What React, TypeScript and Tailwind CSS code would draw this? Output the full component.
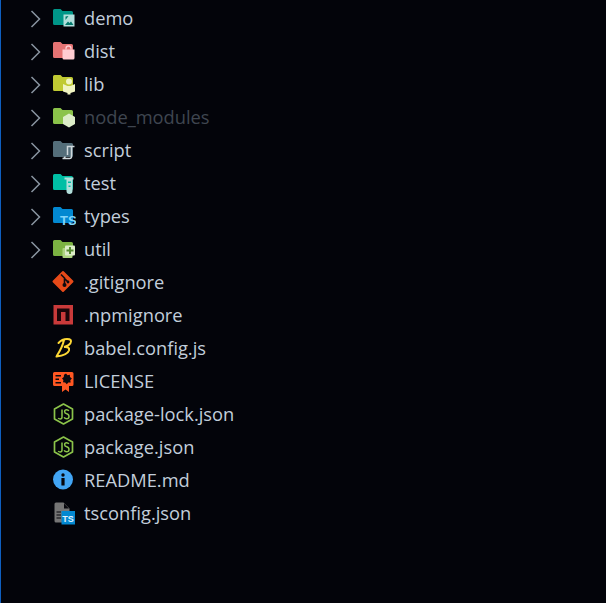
import type { ReactNode } from "react";

function Folder({ color, children }: { color: string; children?: ReactNode }) {
  return (
    <svg width="24" height="24" viewBox="0 0 24 24" aria-hidden="true">
      <path
        d="M2.500 3H8.500L10.500 5H19.500A1.500 1.500 0 0 1 21 6.500V17.500A1.500 1.500 0 0 1 19.500 19H2.500A1.500 1.500 0 0 1 1 17.500V4.500A1.500 1.500 0 0 1 2.500 3Z"
        fill={color}
      />
      {children}
    </svg>
  );
}

function Icon({ children }: { children: ReactNode }) {
  return (
    <svg width="24" height="24" viewBox="0 0 24 24" aria-hidden="true">
      {children}
    </svg>
  );
}

function JsHex() {
  return (
    <Icon>
      <path
        d="M11.500 2L20.500 7V17L11.500 22L2.500 17V7Z"
        fill="none"
        stroke="#8bc34a"
        strokeWidth="1.700"
        strokeLinejoin="round"
      />
      <path
        d="M10 7.500V15Q10 17 8.200 17Q6.800 17 6.300 16"
        fill="none"
        stroke="#8bc34a"
        strokeWidth="1.500"
      />
      <path
        d="M16.800 9Q16.200 7.700 14.600 7.700Q12.600 7.700 12.600 9.600Q12.600 11.300 14.700 11.800Q17 12.400 17 14.400Q17 16.700 14.700 16.700Q12.800 16.700 12.200 15.200"
        fill="none"
        stroke="#8bc34a"
        strokeWidth="1.500"
      />
    </Icon>
  );
}

const rows: { name: string; icon: ReactNode; folder?: boolean; dim?: boolean }[] = [
  {
    name: "demo",
    folder: true,
    icon: (
      <Folder color="#009688">
        <rect x="11.500" y="8.500" width="11" height="12" fill="#b2dfdb" />
        <path d="M13 19L16 15.500L17.500 17L19 15.500L21.500 19Z" fill="#00796b" />
        <path d="M13.500 10.500L16.500 10L13.500 14Z" fill="#00796b" />
      </Folder>
    ),
  },
  {
    name: "dist",
    folder: true,
    icon: (
      <Folder color="#e57373">
        <path d="M10.500 10.500H22.500V19A1.500 1.500 0 0 1 21 20.500H12A1.500 1.500 0 0 1 10.500 19Z" fill="#ffcdd2" />
        <path d="M14 10.500V9.500A2.500 2.500 0 0 1 19 9.500V10.500" fill="none" stroke="#ffcdd2" strokeWidth="1.300" />
      </Folder>
    ),
  },
  {
    name: "lib",
    folder: true,
    icon: (
      <Folder color="#c0ca33">
        <path d="M11 12L15.500 14H18.500L23 12V19.500L18.500 21V22.500H15.500V21L11 19.500Z" fill="#f0f4c3" />
        <circle cx="17" cy="9.500" r="3" fill="#f0f4c3" />
      </Folder>
    ),
  },
  {
    name: "node_modules",
    folder: true,
    dim: true,
    icon: (
      <Folder color="#8bc34a">
        <path d="M17 8.500L23 12V19L17 22.500L11 19V12Z" fill="#dcedc8" />
      </Folder>
    ),
  },
  {
    name: "script",
    folder: true,
    icon: (
      <Folder color="#546e7a">
        <path
          d="M15.500 17V8.500H22.500M19.500 8.500V18.500Q19.500 20.500 17.500 20.500H10.500Q13 20.500 13 18.500"
          fill="none"
          stroke="#cfd8dc"
          strokeWidth="1.500"
        />
      </Folder>
    ),
  },
  {
    name: "test",
    folder: true,
    icon: (
      <Folder color="#00bfa5">
        <path d="M12.500 6.500H21.500V8.500H20.500V20A3 3 0 0 1 14.500 20V8.500H12.500Z" fill="#b2dfdb" />
        <rect x="16" y="10.500" width="3" height="1.500" fill="#00bfa5" />
        <rect x="16.500" y="14.500" width="2" height="1.500" fill="#00bfa5" />
      </Folder>
    ),
  },
  {
    name: "types",
    folder: true,
    icon: (
      <Folder color="#0288d1">
        <text x="8" y="21" fontFamily="'Liberation Sans', sans-serif" fontWeight="700" fontSize="13" fill="#81d4fa">
          TS
        </text>
      </Folder>
    ),
  },
  {
    name: "util",
    folder: true,
    icon: (
      <Folder color="#7cb342">
        <rect x="10.500" y="11" width="10" height="10" rx="1" fill="#aed581" />
        <rect x="13" y="8.500" width="10" height="10" rx="1" fill="#dcedc8" />
        <path d="M18 10V17M14.500 13.500H21.500" stroke="#558b2f" strokeWidth="2" />
      </Folder>
    ),
  },
  {
    name: ".gitignore",
    icon: (
      <Icon>
        <path d="M11 2L20.500 11.500L11 21L1.500 11.500Z" fill="#e64a19" stroke="#e64a19" strokeWidth="2" strokeLinejoin="round" />
        <path d="M9 4.500L12.500 8V15M12.500 8.500L16 12" fill="none" stroke="#0a0a10" strokeWidth="1.600" />
        <circle cx="12.500" cy="15" r="2" fill="#0a0a10" />
        <circle cx="16" cy="12" r="1.400" fill="#0a0a10" />
      </Icon>
    ),
  },
  {
    name: ".npmignore",
    icon: (
      <Icon>
        <rect x="1.500" y="2" width="19.500" height="19.500" fill="#c93a3a" />
        <path d="M5 18V5.500H17.500V18H13.500V9H9V18Z" fill="#1a0508" />
      </Icon>
    ),
  },
  {
    name: "babel.config.js",
    icon: (
      <Icon>
        <path
          d="M6.500 7Q10 3 15 3Q20.500 3 18.500 7Q17 9.800 12 11Q18 10.500 17 14.500Q15.500 19 4.500 20.500M12 4Q10.500 11 5 19.500"
          fill="none"
          stroke="#fdd835"
          strokeWidth="2"
          strokeLinecap="round"
        />
      </Icon>
    ),
  },
  {
    name: "LICENSE",
    icon: (
      <Icon>
        <path
          d="M2.500 3H20A1.500 1.500 0 0 1 21.500 4.500V15.500A1.500 1.500 0 0 1 20 17H17V23L13.500 20.500L10 23V17H2.500A1.500 1.500 0 0 1 1 15.500V4.500A1.500 1.500 0 0 1 2.500 3Z"
          fill="#ff5722"
        />
        <path d="M3.500 6H9V7.500H3.500ZM3.500 9.500H7V11H3.500ZM3.500 13H9V14.500H3.500Z" fill="#0a0a10" />
        <path
          d="M14 4.500L15.500 6.300L17.800 5.800L18 8L19.900 9.500L18.300 11.200L18.700 13.400L16.300 13.600L14.800 15.300L13.200 13.600L11 13.200L11.400 11L10 9.500L11.800 8L12 5.800Z"
          fill="#0a0a10"
        />
      </Icon>
    ),
  },
  { name: "package-lock.json", icon: <JsHex /> },
  { name: "package.json", icon: <JsHex /> },
  {
    name: "README.md",
    icon: (
      <Icon>
        <circle cx="11" cy="11.500" r="10" fill="#42a5f5" />
        <circle cx="11" cy="7" r="1.700" fill="#06060c" />
        <rect x="9.400" y="10" width="3.200" height="7.500" rx="0.500" fill="#06060c" />
      </Icon>
    ),
  },
  {
    name: "tsconfig.json",
    icon: (
      <Icon>
        <path d="M4 1.500H11.500L17.500 7.500V12H11V21.500H4A1.500 1.500 0 0 1 2.500 20V3A1.500 1.500 0 0 1 4 1.500Z" fill="#757575" />
        <path d="M12 2.500V7.500H17Z" fill="#06060c" />
        <path d="M4.500 11H9M4.500 14H9M4.500 17H9" stroke="#06060c" strokeWidth="1.200" />
        <rect x="9.500" y="10" width="13.500" height="13.500" fill="#0288d1" />
        <text x="10.200" y="21" fontFamily="'Liberation Sans', sans-serif" fontWeight="700" fontSize="9" fill="#e3f2fd">
          TS
        </text>
      </Icon>
    ),
  },
];

export default function App() {
  return (
    <div className="h-[603px] w-[606px] overflow-hidden border-l border-[#0f5fc0] bg-[#03040a] pt-[2px] font-['Open_Sans','Noto_Sans',sans-serif] text-[18.3px]">
      {rows.map((row) => (
        <div key={row.name} className="flex h-[33px] items-center">
          <div className="ml-[29px] flex w-[22px] items-center">
            {row.folder && (
              <svg width="12" height="18" viewBox="0 0 12 18" aria-hidden="true">
                <path d="M1.500 1L9.500 9L1.500 17" fill="none" stroke="#8a95a1" strokeWidth="1.500" />
              </svg>
            )}
          </div>
          <div className="h-6 w-6 shrink-0 -translate-y-px">{row.icon}</div>
          <span className={`ml-2 -translate-y-px ${row.dim ? "text-[#3f4650]" : "text-[#c2cedb]"}`}>{row.name}</span>
        </div>
      ))}
    </div>
  );
}
